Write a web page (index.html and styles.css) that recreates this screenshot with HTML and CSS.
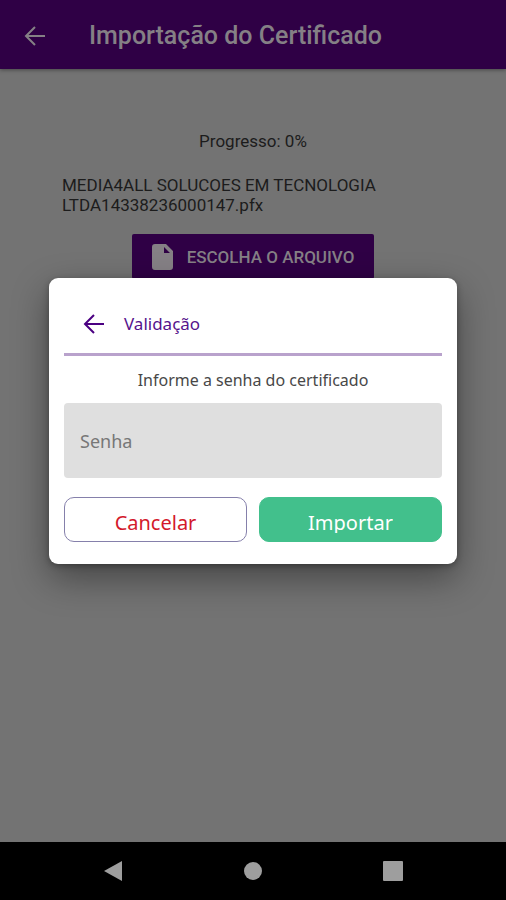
FILE: index.html
```html
<!DOCTYPE html>
<html lang="pt-BR">
<head>
  <meta charset="utf-8">
  <meta name="viewport" content="width=device-width, initial-scale=1">
  <title>Importação do Certificado</title>
  <link rel="stylesheet" href="styles.css">
</head>
<body>
  <div class="screen">
    <header class="app-bar">
      <button class="icon-btn" type="button" aria-label="Voltar">
        <svg width="22" height="22" viewBox="0 0 22 22"><path d="M21 11H2M11 2L2 11l9 9"/></svg>
      </button>
      <h1>Importação do Certificado</h1>
    </header>

    <main class="content">
      <p class="progress">Progresso: 0%</p>
      <p class="file-name">MEDIA4ALL SOLUCOES EM TECNOLOGIA LTDA14338236000147.pfx</p>
      <button class="choose-btn" type="button">
        <svg width="21" height="26" viewBox="0 0 21 26"><path d="M3 0h11l7 7v16a3 3 0 0 1-3 3H3a3 3 0 0 1-3-3V3a3 3 0 0 1 3-3zM12 3v6h6z"/></svg>
        ESCOLHA O ARQUIVO
      </button>
    </main>

    <div class="overlay">
      <form class="dialog" role="dialog" aria-labelledby="dialogTitle">
        <div class="dialog-header">
          <button class="icon-btn" type="button" aria-label="Fechar">
            <svg width="22" height="22" viewBox="0 0 22 22"><path d="M21 11H2M11 2L2 11l9 9"/></svg>
          </button>
          <h2 id="dialogTitle">Validação</h2>
        </div>
        <label class="hint" for="senha">Informe a senha do certificado</label>
        <input class="password" type="password" id="senha" placeholder="Senha">
        <div class="actions">
          <button class="btn cancel" type="button"><span>Cancelar</span></button>
          <button class="btn import" type="submit"><span>Importar</span></button>
        </div>
      </form>
    </div>
  </div>

  <nav class="nav-bar">
    <button type="button" aria-label="Voltar">
      <svg width="20" height="22" viewBox="0 0 20 22"><path d="M1 11L19 1v20z"/></svg>
    </button>
    <button type="button" aria-label="Início">
      <svg width="20" height="20" viewBox="0 0 20 20"><circle cx="10" cy="10" r="9"/></svg>
    </button>
    <button type="button" aria-label="Recentes">
      <svg width="20" height="20" viewBox="0 0 20 20"><rect width="20" height="20" rx="1"/></svg>
    </button>
  </nav>
</body>
</html>
```
FILE: styles.css
```css
*{
  box-sizing: border-box;
}
body{
  margin: 0;
  min-height: 100vh;
  display: flex;
  flex-direction: column;
  background-color: #737373;
  font-family: Roboto, "Liberation Sans", sans-serif;
}
h1,h2,p{
  margin: 0;
}
button{
  border: 0;
  padding: 0;
  background: none;
  font-family: inherit;
  cursor: pointer;
}
svg{
  display: block;
}
.screen{
  flex: 1;
  position: relative;
}

/* barra superior */
.app-bar{
  display: flex;
  align-items: center;
  gap: 43px;
  height: 69px;
  padding: 2px 24px 0;
  background-color: #2f0045;
  color: #858085;
  box-shadow: 0 1px 4px rgba(0,0,0,.4);
}
.app-bar h1{
  font-size: 25px;
  font-weight: 500;
}
.icon-btn svg{
  fill: none;
  stroke: #858085;
  stroke-width: 2;
}

.content{
  display: flex;
  flex-direction: column;
  align-items: center;
  padding: 62px 62px 0;
  color: #1c1c1c;
  font-size: 17px;
  line-height: 20px;
}
.file-name{
  width: 100%;
  margin: 24px 0 19px;
}
.choose-btn{
  display: flex;
  align-items: center;
  gap: 14px;
  height: 45px;
  padding: 0 20px;
  border-radius: 2px;
  background-color: #2f0045;
  color: #858085;
  font-size: 17px;
  font-weight: 500;
}
.choose-btn svg{
  fill: #858085;
  fill-rule: evenodd;
}

/* janela de validação */
.overlay{
  position: absolute;
  inset: 0;
  display: flex;
  align-items: center;
  padding: 0 49px;
}
.dialog{
  width: 100%;
  padding: 16px 15px 22px;
  border-radius: 9px;
  background-color: #fff;
  box-shadow: 0 14px 36px rgba(0,0,0,.4), 0 2px 6px rgba(0,0,0,.3);
  font-family: "Noto Sans", sans-serif;
}
.dialog-header{
  display: flex;
  align-items: center;
  gap: 19px;
  height: 62px;
  padding-left: 19px;
  border-bottom: 3px solid #b9a2cc;
}
.dialog-header h2{
  color: #56138c;
  font-size: 17px;
  font-weight: 400;
}
.dialog-header svg{
  stroke: #4b0082;
}
.hint{
  display: block;
  padding: 12px 0 11px;
  color: #484848;
  font-size: 16px;
  line-height: 24px;
  text-align: center;
}
.password{
  display: block;
  width: 100%;
  height: 75px;
  padding: 0 16px;
  border: 0;
  border-radius: 4px;
  background-color: #dfdfdf;
  color: #484848;
  font-family: inherit;
  font-size: 18px;
}
.password::placeholder{
  color: #777;
}
.actions{
  display: flex;
  gap: 12px;
  margin-top: 19px;
}
.btn{
  display: flex;
  flex: 1;
  align-items: flex-start;
  justify-content: center;
  height: 45px;
  padding-top: 11px;
  border: 1px solid transparent;
  border-radius: 10px;
  font-size: 20px;
  line-height: 28px;
}
.cancel{
  border-color: #8580ab;
  color: #d3192b;
}
.import{
  border-color: #42c08c;
  background-color: #42c08c;
  color: #fff;
}
/* a caixa do texto é mais baixa que a linha */
.import span{
  height: 24px;
  overflow: hidden;
}

/* barra do sistema */
.nav-bar{
  display: flex;
  justify-content: center;
  align-items: center;
  gap: 120px;
  height: 58px;
  background-color: #000;
}
.nav-bar svg{
  fill: #9e9e9e;
}
```
